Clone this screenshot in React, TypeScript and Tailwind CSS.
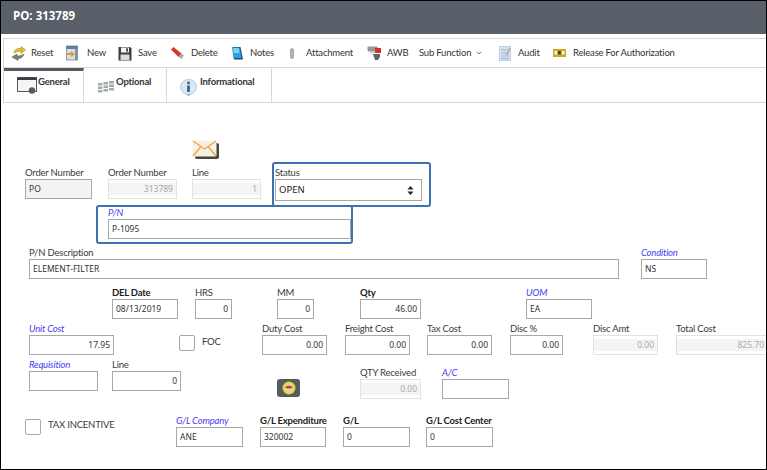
import { ReactNode } from "react";
import { ChevronDown } from "lucide-react";

const labelFont = "font-['Lato',sans-serif] text-[9.500px] leading-[15px] tracking-[-0.2px]";
const inputFont = "font-['Noto_Sans',sans-serif] text-[8.500px]";

const IconReset = () => (
  <svg width="16" height="16" viewBox="0 0 16 16">
    <path d="M3 8c0-3 3-5 7-4.500V1.500l4.500 3.500L10 8.500V6.500C7 6 5 7 3 8z" fill="#e8b82e" stroke="#a07c14" strokeWidth="0.5" />
    <path d="M13 9c-1 3-3 4.500-6 4.500v2L1 12l5-3v2c2.500 0 5-.5 7-2z" fill="#85826c" stroke="#55533f" strokeWidth="0.5" />
  </svg>
);
const IconNew = () => (
  <svg width="12" height="16" viewBox="0 0 12 16">
    <rect x="0.500" y="1" width="11" height="14" fill="#d5dfeb" stroke="#8b9bb0" />
    <rect x="0.500" y="1" width="11" height="3" fill="#5f7c9e" />
    <path d="M0 8h5V6l4 3-4 3v-2H0z" fill="#e8982c" />
    <rect x="9" y="4" width="2.500" height="11" fill="#7b93b0" />
  </svg>
);
const IconSave = () => (
  <svg width="14" height="15" viewBox="0 0 14 15">
    <path d="M0.500 1h11.500l1.500 1.500V14.500H.5z" fill="#3a3d44" />
    <rect x="3" y="1.500" width="8" height="5" fill="#f4f4f4" />
    <rect x="8.200" y="2.200" width="1.700" height="3.500" fill="#3a3d44" />
    <rect x="2.500" y="8.500" width="9" height="5.500" fill="#dcdcdc" />
  </svg>
);
const IconDelete = () => (
  <svg width="15" height="14" viewBox="0 0 15 14">
    <path d="M1 3.500 3.500 1l8 6.500L8.500 11z" fill="#d8352f" />
    <path d="M8.500 11l3-3.500 2.500 2-2.500 3.500z" fill="#a9acb2" />
  </svg>
);
const IconNotes = () => (
  <svg width="12" height="15" viewBox="0 0 12 15">
    <path d="M1.500 1h8L12 13.500H3z" fill="#1c4f78" />
    <path d="M1 1.500h7.500L10.500 12H2.500z" fill="#2ba0dc" />
    <path d="M2 2h5.500l1 5H2.800z" fill="#7fd0f2" />
  </svg>
);
const IconClip = () => (
  <svg width="6" height="11" viewBox="0 0 6 11">
    <rect x="1.500" y="0.500" width="3" height="10" rx="1.500" fill="#b2b5b5" stroke="#85888a" strokeWidth="0.6" />
  </svg>
);
const IconAwb = () => (
  <svg width="15" height="16" viewBox="0 0 15 16">
    <rect x="0.500" y="1.500" width="10" height="5" rx="1" fill="#94979c" />
    <rect x="8" y="3" width="6" height="5" fill="#d2322d" />
    <path d="M6 9h7v3l-2 3H8z" fill="#5f6267" />
    <rect x="3" y="7" width="5" height="1.500" fill="#c9ccd0" />
  </svg>
);
const IconAudit = () => (
  <svg width="12" height="15" viewBox="0 0 12 15">
    <rect x="0.500" y="0.500" width="11" height="14" fill="#d5e2f2" stroke="#c0cfe2" />
    <path d="M2 4h7M2 7h7M2 10h8M2 12.500h8" stroke="#9aacc4" strokeWidth="0.9" />
    <path d="M8 9l3-7" stroke="#b29a68" strokeWidth="1.100" />
  </svg>
);
const IconRelease = () => (
  <svg width="13" height="8" viewBox="0 0 13 8">
    <rect width="13" height="8" fill="#c9a92b" />
    <rect x="1.500" y="2" width="2.500" height="3.500" fill="#fff7d0" />
    <rect x="5.200" y="2" width="2.500" height="3.500" fill="#4a3d10" />
    <rect x="9" y="2" width="2.500" height="3.500" fill="#fff7d0" />
  </svg>
);
const IconWindow = () => (
  <svg width="20" height="17" viewBox="0 0 20 17">
    <rect x="0.500" y="0.500" width="19" height="14" fill="#f4f5f6" stroke="#55585d" />
    <rect x="0.500" y="0.500" width="19" height="2.500" fill="#3a3d42" />
    <circle cx="15" cy="13.500" r="3.200" fill="#565b62" />
  </svg>
);
const IconGrid = () => (
  <svg width="16" height="12" viewBox="0 0 16 12">
    <g fill="#a3aaab">
      <rect x="0" y="2" width="4.500" height="2.500" />
      <rect x="5.500" y="1" width="4.500" height="2.500" />
      <rect x="11" y="0" width="5" height="2.500" />
      <rect x="0" y="5.500" width="4.500" height="2.500" />
      <rect x="5.500" y="4.500" width="4.500" height="2.500" />
      <rect x="11" y="3.500" width="5" height="2.500" />
      <rect x="0" y="9" width="4.500" height="2.500" />
      <rect x="5.500" y="8" width="4.500" height="2.500" />
      <rect x="11" y="7" width="5" height="2.500" />
    </g>
  </svg>
);
const IconInfo = () => (
  <svg width="17" height="17" viewBox="0 0 17 17">
    <ellipse cx="8.500" cy="8" rx="8" ry="7.500" fill="#dbe7f3" stroke="#a3b6ca" strokeWidth="0.7" />
    <circle cx="8.500" cy="4" r="1.400" fill="#2f5f8e" />
    <rect x="7.200" y="6.500" width="2.600" height="6.500" fill="#2f5f8e" />
    <path d="M6 15.500h5l-2.500 1.500z" fill="#8fa3b8" />
  </svg>
);
const IconMail = () => (
  <svg width="27" height="19" viewBox="0 0 27 19">
    <rect x="3" y="3" width="24" height="16" rx="2" fill="#4a463a" />
    <rect x="0.500" y="0.500" width="24" height="16" rx="1.500" fill="#f5f1e4" />
    <path d="M1 1l11.500 8L24 1M1 16l8-9.500M24 16l-8-9.500" fill="none" stroke="#eda83a" strokeWidth="1.400" />
  </svg>
);
const IconBadge = () => (
  <div className="flex h-[18px] w-[23px] items-center justify-center rounded-[3px] bg-[#565b63]">
    <svg width="14" height="14" viewBox="0 0 14 14">
      <circle cx="7" cy="7" r="6.500" fill="#e8d42a" />
      <circle cx="7" cy="7" r="4.400" fill="#ddd0b8" />
      <path d="M3.200 6.500c1.500-2.200 5.500-2.200 7.600 0-2 1.200-5.600 1.200-7.600 0z" fill="#c7392f" />
    </svg>
  </div>
);

const ToolItem = ({ icon, label, slot, width }: { icon: ReactNode; label: string; slot: string; width: string }) => (
  <div className={`flex shrink-0 items-center ${width}`}>
    <div className={`flex shrink-0 ${slot}`}>{icon}</div>
    <span className="font-['Lato',sans-serif] whitespace-nowrap text-[9.500px] tracking-[-0.2px] text-[#333]">{label}</span>
  </div>
);

const Tab = ({ icon, label, pad, iconTop, gap, width }: { icon: ReactNode; label: string; pad: string; iconTop: string; gap: string; width: string }) => (
  <div className={`flex h-[34px] items-start border-r border-[#d8d8d8] ${pad} ${width}`}>
    <div className={`shrink-0 ${iconTop}`}>{icon}</div>
    <span className={`font-['Lato',sans-serif] ${gap} whitespace-nowrap text-[9.500px] font-bold leading-[12px] tracking-[-0.2px] text-[#333]`}>{label}</span>
  </div>
);

type FieldProps = {
  label?: string;
  value?: string;
  w: string;
  ml?: string;
  kind?: "req" | "bold" | "plain";
  right?: boolean;
  disabled?: boolean;
  shaded?: boolean;
};

const Field = ({ label, value, w, ml = "", kind = "plain", right, disabled, shaded }: FieldProps) => (
  <div className={`flex shrink-0 flex-col ${w} ${ml}`}>
    <span
      className={`${labelFont} mb-[1px] h-[13px] whitespace-nowrap ${
        kind === "req" ? "italic text-[#4a3df0]" : kind === "bold" ? "font-bold text-[#222]" : "text-[#3a3a3a]"
      }`}
    >
      {label}
    </span>
    <div
      className={`${inputFont} flex h-[20px] items-center px-[3px] ${right ? "justify-end" : ""} border ${
        disabled
          ? "border-[#e2e2e2] bg-[linear-gradient(#fff_3px,#f4f4f4_3px,#f4f4f4_15px,#fff_15px)] text-[#aaa]"
          : shaded
          ? "border-[#a8a8a8] bg-[#f3f3f3] text-[#333]"
          : "border-[#a8a8a8] bg-white text-[#333]"
      }`}
    >
      {value}
    </div>
  </div>
);

const Check = ({ size }: { size: string }) => (
  <div className={`shrink-0 rounded-[2px] border border-[#a8a8a8] bg-white ${size}`} />
);

export default function App() {
  return (
    <div className="h-[470px] w-[767px] overflow-hidden border border-black bg-white">
      <div className="flex h-[33px] items-center bg-[#5a6069] pb-[4px] pl-[12px]">
        <span className="font-['Open_Sans',sans-serif] text-[11.500px] font-bold text-white">PO: 313789</span>
      </div>

      {/* toolbar */}
      <div className="ml-[2px] mt-[4px] border-y border-l border-[#d8d8d8]">
        <div className="flex h-[28px] items-center pl-[7px]">
          <ToolItem icon={<IconReset />} slot="w-[20px]" width="w-[55px]" label="Reset" />
          <ToolItem icon={<IconNew />} slot="w-[21px]" width="w-[52px]" label="New" />
          <ToolItem icon={<IconSave />} slot="w-[20px]" width="w-[52px]" label="Save" />
          <ToolItem icon={<IconDelete />} slot="w-[21px]" width="w-[61px]" label="Delete" />
          <ToolItem icon={<IconNotes />} slot="w-[19px]" width="w-[58px]" label="Notes" />
          <ToolItem icon={<IconClip />} slot="w-[17px]" width="w-[78px]" label="Attachment" />
          <ToolItem icon={<IconAwb />} slot="w-[20px]" width="w-[52px]" label="AWB" />
          <div className="flex w-[80px] shrink-0 items-center font-['Lato',sans-serif] text-[9.500px] tracking-[-0.2px] text-[#333]">
            Sub Function
            <ChevronDown className="ml-[4px] h-[8px] w-[8px]" strokeWidth={2} />
          </div>
          <ToolItem icon={<IconAudit />} slot="w-[19px]" width="w-[54px]" label="Audit" />
          <ToolItem icon={<IconRelease />} slot="w-[20px]" width="w-[170px]" label="Release For Authorization" />
        </div>
      </div>

      {/* tabs */}
      <div className="ml-[2px] flex border-b border-l border-[#d8d8d8]">
        <Tab
          icon={<IconWindow />}
          label="General"
          pad="border-t-[3px] border-t-[#565b63] pl-[13px] pt-[5px]"
          iconTop="mt-[1px]"
          gap="ml-[1px]"
          width="w-[80px]"
        />
        <Tab icon={<IconGrid />} label="Optional" pad="pl-[14px] pt-[8px]" iconTop="mt-[5px]" gap="ml-[2px]" width="w-[83px]" />
        <Tab icon={<IconInfo />} label="Informational" pad="pl-[13px] pt-[8px]" iconTop="mt-[3px]" gap="ml-[3px]" width="w-[105px]" />
      </div>

      <div className="pl-[24px]">
        <div className="ml-[167px] mt-[37px] h-[19px]">
          <IconMail />
        </div>

        {/* order row with status */}
        <div className="mt-[6px] flex h-[40px] items-start">
          <Field label="Order Number" value="PO" w="w-[67px]" shaded />
          <Field label="Order Number" value="313789" w="w-[69px]" ml="ml-[16px]" right disabled />
          <Field label="Line" value="1" w="w-[69px]" ml="ml-[15px]" right disabled />
          <div className="relative z-10 -mt-[3px] ml-[11px] h-[45px] w-[159px] shrink-0 rounded-[3px] border-2 border-[#3a74b3] bg-white pl-[1px] pt-[1px]">
            <div className={`${labelFont} mb-[1px] h-[13px] text-[#3a3a3a]`}>Status</div>
            <div className="flex h-[22px] w-[147px] items-center justify-between border border-[#a8a8a8] pl-[3px] pr-[7px] font-['Noto_Sans',sans-serif] text-[9.500px] text-[#222]">
              OPEN
              <svg width="7" height="9" viewBox="0 0 7 9">
                <path d="M3.500 0 6.500 3.500H.5zM3.500 9 .5 5.500h6z" fill="#222" />
              </svg>
            </div>
          </div>
        </div>

        {/* P/N */}
        <div className="ml-[71px] h-[39px] w-[257px] rounded-[3px] border-2 border-[#3a74b3] pl-[10px]">
          <div className={`${labelFont} h-[12px] italic !leading-[11px] text-[#4a3df0]`}>P/N</div>
          <div className={`${inputFont} flex h-[20px] w-[243px] items-center border border-[#a8a8a8] px-[3px] text-[#333]`}>P-1095</div>
        </div>

        <div className="mt-[1px] flex items-start">
          <Field label="P/N Description" value="ELEMENT-FILTER" w="w-[590px]" ml="ml-[4px]" />
          <Field label="Condition" value="NS" w="w-[66px]" ml="ml-[22px]" kind="req" />
        </div>

        <div className="mt-[6px] flex items-start">
          <Field label="DEL Date" value="08/13/2019" w="w-[66px]" ml="ml-[87px]" kind="bold" />
          <Field label="HRS" value="0" w="w-[37px]" ml="ml-[17px]" right />
          <Field label="MM" value="0" w="w-[37px]" ml="ml-[45px]" right />
          <Field label="Qty" value="46.00" w="w-[61px]" ml="ml-[46px]" kind="bold" right />
          <Field label="UOM" value="EA" w="w-[66px]" ml="ml-[105px]" kind="req" />
        </div>

        <div className="mt-[2px] flex items-start">
          <Field label="Unit Cost" value="17.95" w="w-[85px]" ml="ml-[4px]" kind="req" right />
          <div className="ml-[65px] mt-[14px] flex w-[83px] shrink-0 items-start">
            <Check size="h-[16px] w-[16px]" />
            <span className={`${labelFont} -mt-[1px] ml-[7px] text-[#3a3a3a]`}>FOC</span>
          </div>
          <Field label="Duty Cost" value="0.00" w="w-[65px]" right />
          <Field label="Freight Cost" value="0.00" w="w-[65px]" ml="ml-[18px]" right />
          <Field label="Tax Cost" value="0.00" w="w-[65px]" ml="ml-[17px]" right />
          <Field label="Disc %" value="0.00" w="w-[53px]" ml="ml-[18px]" right />
          <Field label="Disc Amt" value="0.00" w="w-[65px]" ml="ml-[30px]" right disabled />
          <Field label="Total Cost" value="825.70" w="w-[92px]" ml="ml-[18px]" right disabled />
        </div>

        <div className="mt-[2px] flex items-start">
          <Field label="Requisition" w="w-[69px]" ml="ml-[4px]" kind="req" />
          <Field label="Line" value="0" w="w-[69px]" ml="ml-[14px]" right />
          <div className="ml-[96px] mt-[22px]">
            <IconBadge />
          </div>
          <div className="ml-[60px] mt-[8px]">
            <Field label="QTY Received" value="0.00" w="w-[61px]" right disabled />
          </div>
          <div className="ml-[21px] mt-[8px]">
            <Field label="A/C" w="w-[67px]" kind="req" />
          </div>
        </div>

        <div className="mt-[14px] flex items-start">
          <div className="mt-[6px] flex w-[151px] shrink-0 items-start">
            <Check size="h-[16px] w-[16px]" />
            <span className={`${labelFont} -mt-[2px] ml-[7px] whitespace-nowrap text-[#3a3a3a]`}>TAX INCENTIVE</span>
          </div>
          <Field label="G/L Company" value="ANE" w="w-[67px]" kind="req" />
          <Field label="G/L Expenditure" value="320002" w="w-[66px]" ml="ml-[17px]" kind="bold" />
          <Field label="G/L" value="0" w="w-[67px]" ml="ml-[17px]" kind="bold" />
          <Field label="G/L Cost Center" value="0" w="w-[67px]" ml="ml-[16px]" kind="bold" />
        </div>
      </div>
    </div>
  );
}
